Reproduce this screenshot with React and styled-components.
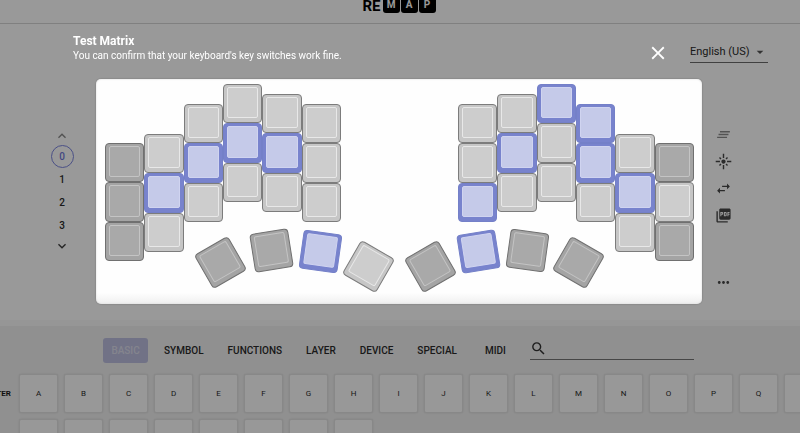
import React from "react";
import styled, { createGlobalStyle, css } from "styled-components";
import {
  MdArrowDropDown,
  MdClearAll,
  MdClose,
  MdFlare,
  MdKeyboardArrowDown,
  MdKeyboardArrowUp,
  MdMoreHoriz,
  MdPictureAsPdf,
  MdSearch,
  MdSwapHoriz,
} from "react-icons/md";

const GlobalStyle = createGlobalStyle`
  *, *::before, *::after { box-sizing: border-box; }
  body {
    margin: 0;
    overflow: hidden;
    background: #fff;
    color: #2b2b2b;
    font-family: Roboto, "Liberation Sans", sans-serif;
  }
  button, select, input { font: inherit; color: inherit; }
  button {
    padding: 0;
    border: 0;
    background: none;
    cursor: pointer;
  }
`;

const Page = styled.div`
  height: 100vh;
  overflow: hidden;
`;

const Header = styled.header`
  display: flex;
  justify-content: center;
  align-items: flex-end;
  height: 24px;
  padding-bottom: 10px;
  border-bottom: 1px solid #d6d6d6;
`;

const Logo = styled.div`
  display: flex;
  align-items: flex-end;
  gap: 1px;
  height: 13px;
  padding-right: 2px;
  font-weight: 700;
  color: #000;
`;

const LogoWord = styled.span`
  margin-right: 1px;
  font-size: 15px;
  line-height: 14px;
`;

const LogoKey = styled.span`
  width: 17px;
  height: 17px;
  border-radius: 3px;
  background: #000;
  color: #fff;
  font-size: 10px;
  line-height: 17px;
  text-align: center;
`;

const Workspace = styled.main`
  display: grid;
  grid-template-columns: 124px 1fr 154px;
  grid-template-rows: 39px 1fr;
  height: 296px;
`;

const LanguageField = styled.label`
  display: flex;
  align-items: center;
  justify-self: end;
  grid-column: 1 / -1;
  width: 78px;
  height: 22px;
  margin: 17px 32px 0 0;
  border-bottom: 1px solid #6b6b6b;

  svg {
    flex: none;
    margin-left: -16px;
    pointer-events: none;
    color: #555;
  }
`;

const LanguageSelect = styled.select`
  width: 78px;
  padding: 0;
  border: 0;
  outline: 0;
  appearance: none;
  background: transparent;
  font-size: 11px;
  line-height: 16px;
`;

const LayerNav = styled.nav`
  display: flex;
  flex-direction: column;
  align-items: center;
  grid-column: 1;
  padding-top: 64px;
`;

const ArrowButton = styled.button`
  display: grid;
  place-items: center;
  width: 22px;
  height: 18px;
  color: ${(p) => (p.$muted ? "#8a8a8a" : "#3c3c3c")};
`;

const LayerButton = styled.button`
  width: 23px;
  height: 23px;
  border: 1px solid ${(p) => (p.$active ? "#7d86e0" : "transparent")};
  border-radius: 50%;
  color: ${(p) => (p.$active ? "#6f78d8" : "#2b2b2b")};
  font-size: 10px;
  font-weight: 500;
  line-height: 21px;
`;

const Tools = styled.div`
  display: flex;
  flex-direction: column;
  align-items: center;
  gap: 10px;
  grid-column: 3;
  padding-top: 63px;
`;

const ToolButton = styled.button`
  display: grid;
  place-items: center;
  width: 17px;
  height: 17px;
  margin-top: ${(p) => (p.$apart ? "40px" : "0")};
  color: ${(p) => (p.$muted ? "#8a8a8a" : "#484848")};
`;

const Panel = styled.section`
  height: 200px;
  border-top: 6px solid #fafafa;
  background: #f1f1f1;
`;

const TabBar = styled.div`
  display: flex;
  justify-content: center;
  gap: 8px;
  padding: 12px 3px 11px 0;
`;

const Tab = styled.button`
  min-width: 45px;
  height: 25px;
  padding: 0 8px;
  border-radius: 3px;
  background: ${(p) => (p.$active ? "#bcbfe0" : "transparent")};
  color: ${(p) => (p.$active ? "#dcddec" : "#2b2b2b")};
  font-size: 10px;
  font-weight: 500;
`;

const SearchField = styled.label`
  display: flex;
  align-items: center;
  width: 164px;
  height: 22px;
  margin-left: 4px;
  border-bottom: 1px solid #757575;

  svg { flex: none; color: #333; }
`;

const SearchInput = styled.input`
  flex: 1;
  min-width: 0;
  border: 0;
  outline: 0;
  background: transparent;
  font-size: 11px;
`;

const KeycodeGroup = styled.div`
  display: grid;
  grid-template-columns: 19px 1fr;
`;

const GroupLabel = styled.div`
  display: flex;
  justify-content: flex-end;
  width: 11px;
  height: 39px;
  overflow: hidden;
  color: #1c1c1c;
  font-size: 8px;
  font-weight: 700;
  line-height: 39px;
`;

const Keycodes = styled.div`
  display: grid;
  grid-template-columns: repeat(18, 39px);
  gap: 6px;
`;

const Keycode = styled.button`
  height: 39px;
  border: 1px solid #e3e3e3;
  border-radius: 2px;
  background: #fdfdfd;
  box-shadow: 0 0 2px #d0d0d0;
  color: #2b2b2b;
  font-size: 8px;
`;

const Overlay = styled.div`
  position: fixed;
  inset: 0;
  background: rgba(0, 0, 0, 0.4);
`;

const DialogHeader = styled.div`
  display: flex;
  justify-content: space-between;
  align-items: center;
  height: 79px;
  padding: 26px 131px 0 73px;
  color: #fff;
`;

const DialogTitle = styled.h2`
  margin: 0;
  font-size: 12px;
  font-weight: 700;
  line-height: 15px;
`;

const DialogText = styled.p`
  margin: 0 0 9px;
  font-size: 10px;
  line-height: 14px;
`;

const CloseButton = styled.button`
  display: grid;
  place-items: center;
  width: 22px;
  height: 22px;
  color: #fff;
`;

const Board = styled.div`
  margin: 0 98px 0 96px;
  padding: 5px 8px 12px 9px;
  border-radius: 5px;
  background: linear-gradient(#fefefe 95%, #efefef);
  box-shadow: inset 0 0 2px #d0d0d0, 0 0 2px rgba(0, 0, 0, 0.3);
`;

const Halves = styled.div`
  display: flex;
  justify-content: space-between;
`;

const Half = styled.div`
  width: 236px;
`;

const Columns = styled.div`
  display: grid;
  grid-template-columns: repeat(6, 1fr);
  height: 146px;
`;

const Column = styled.div`
  display: flex;
  flex-direction: column;
  height: 118px;
  margin-top: ${(p) => p.$drop}px;
`;

const tones = {
  light: { edge: "#7c7c7c", side: "#c6c6c6", cap: "#cdcdcd", rim: "#e8e8e8" },
  dark: { edge: "#707070", side: "#a4a4a4", cap: "#a9a9a9", rim: "#c4c4c4" },
  blue: { edge: "#7480c8", side: "#7883cd", cap: "#c5cae9", rim: "#d0d4f0" },
};

const KeyBody = styled.div`
  flex: 1;
  padding: 2px 3px 4px;
  border: 1px solid;
  border-radius: 4px;
  ${(p) => css`
    border-color: ${tones[p.$tone].edge};
    background: ${tones[p.$tone].side};
  `}
`;

const KeyCap = styled.div`
  height: 100%;
  border: 1px solid ${(p) => tones[p.$tone].rim};
  border-radius: 2px;
  background: ${(p) => tones[p.$tone].cap};
`;

const ThumbRow = styled.div`
  display: flex;
  height: 62px;
`;

const ThumbKey = styled.div`
  display: flex;
  flex: none;
  width: 39px;
  height: 39px;
  margin: ${(p) => p.$drop}px 0 0 ${(p) => p.$space}px;
  transform: rotate(${(p) => p.$angle}deg);
`;

const leftHand = {
  columns: [
    [59, ["dark", "dark", "dark"]],
    [50, ["light", "blue", "light"]],
    [20, ["light", "blue", "light"]],
    [0, ["light", "blue", "light"]],
    [10, ["light", "blue", "light"]],
    [20, ["light", "light", "light"]],
  ],
  thumbs: [
    { tone: "dark", space: 96, drop: 13, angle: -30 },
    { tone: "dark", space: 12, drop: 1, angle: -9 },
    { tone: "blue", space: 10, drop: 2, angle: 8 },
    { tone: "light", space: 9, drop: 17, angle: 30 },
  ],
};

const rightHand = {
  columns: [
    [20, ["light", "light", "blue"]],
    [10, ["light", "blue", "light"]],
    [0, ["blue", "light", "light"]],
    [20, ["blue", "blue", "light"]],
    [50, ["light", "blue", "light"]],
    [59, ["dark", "light", "dark"]],
  ],
  thumbs: [
    { tone: "dark", space: -47, drop: 17, angle: -30 },
    { tone: "blue", space: 9, drop: 2, angle: -9 },
    { tone: "dark", space: 10, drop: 1, angle: 8 },
    { tone: "dark", space: 12, drop: 13, angle: 30 },
  ],
};

const Switch = ({ tone }) => (
  <KeyBody $tone={tone}>
    <KeyCap $tone={tone} />
  </KeyBody>
);

const Hand = ({ layout }) => (
  <Half>
    <Columns>
      {layout.columns.map(([drop, keys], i) => (
        <Column key={i} $drop={drop}>
          {keys.map((tone, j) => (
            <Switch key={j} tone={tone} />
          ))}
        </Column>
      ))}
    </Columns>
    <ThumbRow>
      {layout.thumbs.map((t, i) => (
        <ThumbKey key={i} $space={t.space} $drop={t.drop} $angle={t.angle}>
          <Switch tone={t.tone} />
        </ThumbKey>
      ))}
    </ThumbRow>
  </Half>
);

const tabs = ["BASIC", "SYMBOL", "FUNCTIONS", "LAYER", "DEVICE", "SPECIAL", "MIDI"];
const letters = "ABCDEFGHIJKLMNOPQRSTUVWXYZ".split("");

export default function App() {
  return (
    <>
      <GlobalStyle />
      <Page>
        <Header>
          <Logo>
            <LogoWord>RE</LogoWord>
            <LogoKey>M</LogoKey>
            <LogoKey>A</LogoKey>
            <LogoKey>P</LogoKey>
          </Logo>
        </Header>
        <Workspace>
          <LanguageField>
            <LanguageSelect aria-label="Language" defaultValue="en">
              <option value="en">English (US)</option>
            </LanguageSelect>
            <MdArrowDropDown size={16} />
          </LanguageField>
          <LayerNav aria-label="Layers">
            <ArrowButton $muted aria-label="Previous layer">
              <MdKeyboardArrowUp size={16} />
            </ArrowButton>
            {[0, 1, 2, 3].map((n) => (
              <LayerButton key={n} $active={n === 0}>{n}</LayerButton>
            ))}
            <ArrowButton aria-label="Next layer">
              <MdKeyboardArrowDown size={16} />
            </ArrowButton>
          </LayerNav>
          <Tools>
            <ToolButton $muted aria-label="Clear all"><MdClearAll size={17} /></ToolButton>
            <ToolButton aria-label="Lighting"><MdFlare size={17} /></ToolButton>
            <ToolButton aria-label="Import"><MdSwapHoriz size={17} /></ToolButton>
            <ToolButton aria-label="Export PDF"><MdPictureAsPdf size={17} /></ToolButton>
            <ToolButton $apart aria-label="More"><MdMoreHoriz size={17} /></ToolButton>
          </Tools>
        </Workspace>
        <Panel>
          <TabBar>
            {tabs.map((name, i) => (
              <Tab key={name} $active={i === 0}>{name}</Tab>
            ))}
            <SearchField>
              <MdSearch size={17} />
              <SearchInput aria-label="Search keycodes" />
            </SearchField>
          </TabBar>
          <KeycodeGroup>
            <GroupLabel>LETTER</GroupLabel>
            <Keycodes>
              {letters.map((l) => (
                <Keycode key={l}>{l}</Keycode>
              ))}
            </Keycodes>
          </KeycodeGroup>
        </Panel>
      </Page>
      <Overlay role="dialog" aria-labelledby="dialog-title">
        <DialogHeader>
          <div>
            <DialogTitle id="dialog-title">Test Matrix</DialogTitle>
            <DialogText>You can confirm that your keyboard's key switches work fine.</DialogText>
          </div>
          <CloseButton aria-label="Close">
            <MdClose size={22} />
          </CloseButton>
        </DialogHeader>
        <Board>
          <Halves>
            <Hand layout={leftHand} />
            <Hand layout={rightHand} />
          </Halves>
        </Board>
      </Overlay>
    </>
  );
}
